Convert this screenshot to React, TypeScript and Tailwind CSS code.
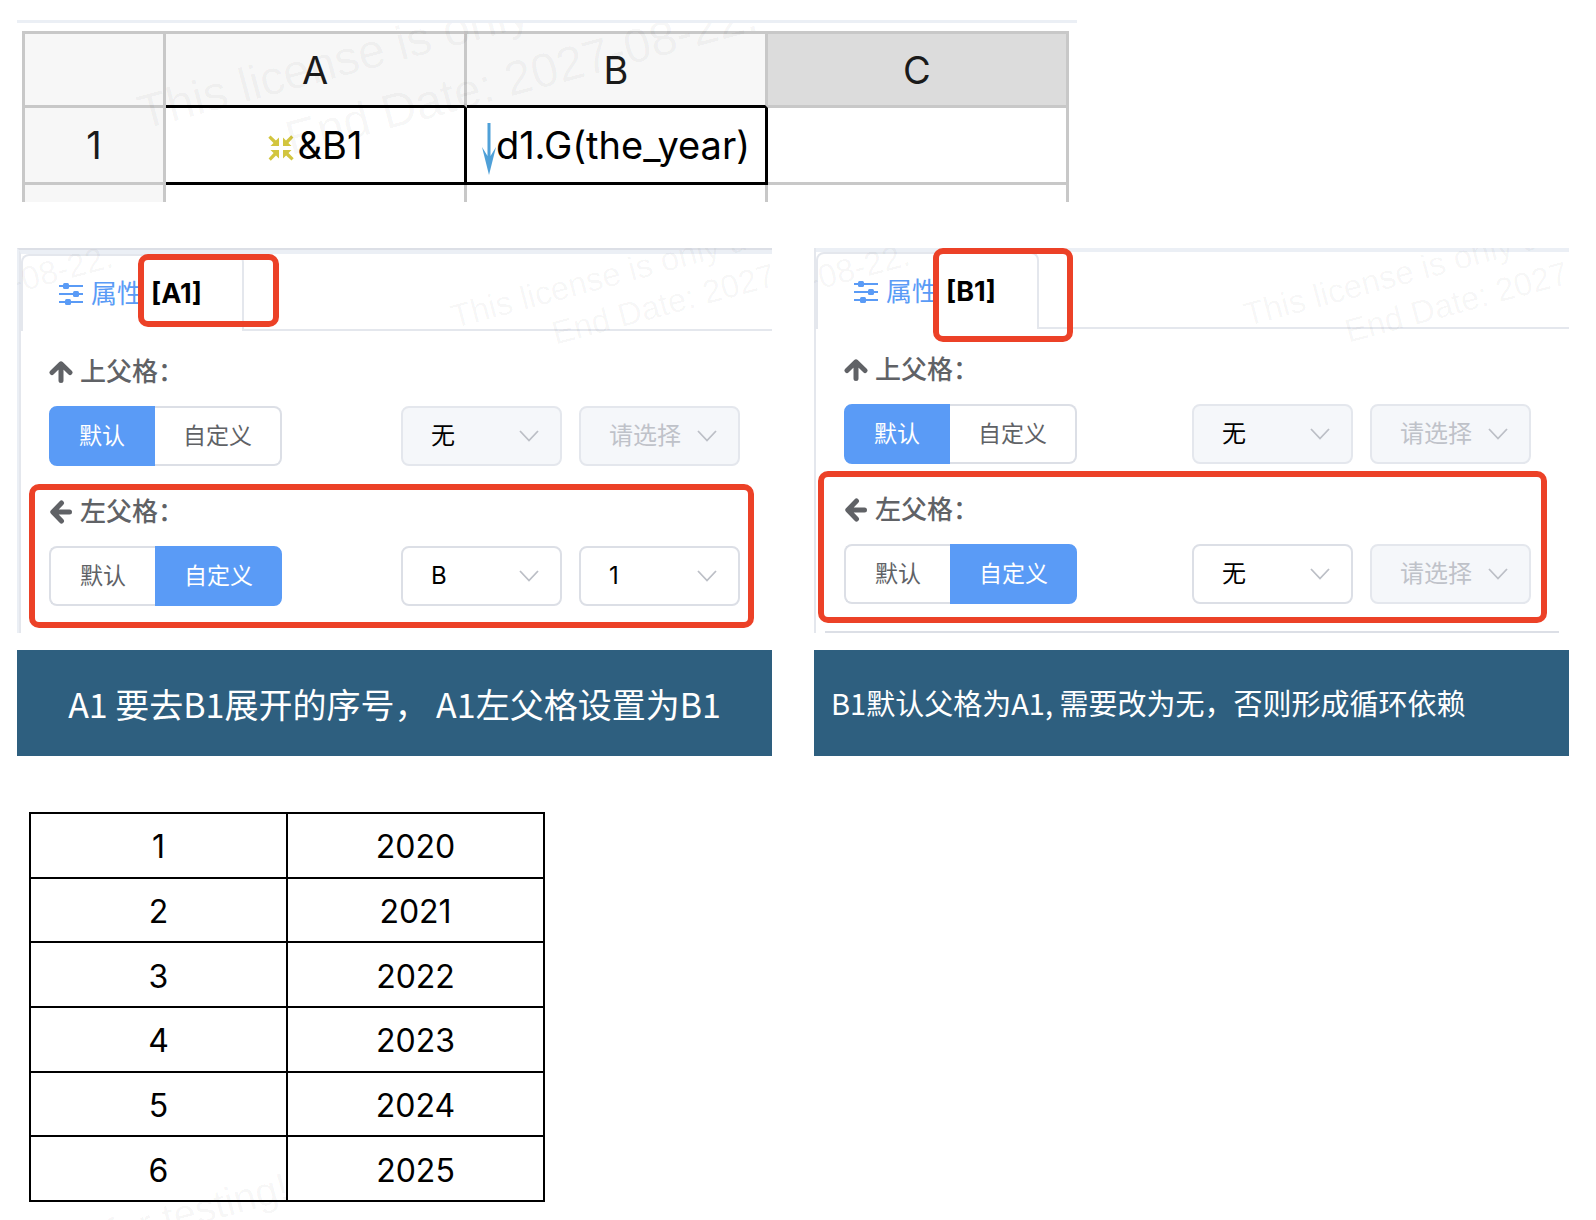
import React, { useId } from "react";

function CompressIcon() {
  return (
    <svg viewBox="0 0 26 26" className="mt-1.5 size-[26px] shrink-0" fill="#d2c53f" aria-hidden="true">
      {[0, 90, 180, 270].map((angle) => (
        <path
          key={angle}
          transform={`rotate(${angle} 13 13)`}
          d="M11 2.500v8.500H2.500l3-3L.3 2.800 2.500.6l5.400 5z"
        />
      ))}
    </svg>
  );
}

function ExpandDownIcon() {
  return (
    <svg viewBox="0 0 14 52" className="mt-2 h-[52px] w-[14px] shrink-0" fill="#4fa0d8" aria-hidden="true">
      <path d="M5.500 0h3v33L14 24 7 52 0 24l5.500 9z" />
    </svg>
  );
}

function SlidersIcon() {
  return (
    <svg viewBox="0 0 24 22" className="h-[22px] w-6 shrink-0" aria-hidden="true">
      <path d="M0 3h24M0 11h24M0 19h24" stroke="#5a9bf6" strokeWidth="1.800" />
      <g fill="#5a9bf6">
        <rect x="4" y="0" width="6" height="6" rx="1.500" />
        <rect x="14" y="8" width="6" height="6" rx="1.500" />
        <rect x="6" y="16" width="6" height="6" rx="1.500" />
      </g>
    </svg>
  );
}

function ArrowIcon({ turn }: { turn: number }) {
  return (
    <svg
      viewBox="0 0 24 24"
      className="size-6 shrink-0"
      fill="none"
      stroke="#606266"
      strokeWidth="5"
      strokeLinecap="round"
      strokeLinejoin="round"
      aria-hidden="true"
    >
      <path transform={`rotate(${turn} 12 12)`} d="M3 12.500 12 3.800l9 8.700M12 5v15.500" />
    </svg>
  );
}

const watermarkBase =
  "pointer-events-none absolute origin-left -rotate-[15deg] whitespace-pre text-center font-['Liberation_Sans',sans-serif] text-black/4";
const licenseText = "This license is only used for testing!\nEnd Date: 2027-08-22.";

function Sheet() {
  const cell = "border-r-[3px] border-b-[3px] p-0 text-center font-normal";
  return (
    <section className="relative max-w-[1060px] overflow-hidden border-t-[3px] border-[#ebeff5] pt-2 pr-2 pl-[5px]">
      <table className="w-full table-fixed border-separate border-spacing-0 border-t-[3px] border-l-[3px] border-[#c8c8c8] text-[38px] leading-none">
        <colgroup>
          <col className="w-[141px]" />
          <col />
          <col />
          <col />
        </colgroup>
        <thead>
          <tr className="h-[74px] bg-[#f7f7f7] text-[#1a1a1a]">
            <th scope="col" aria-label="行号" className={`${cell} border-[#c8c8c8]`} />
            <th scope="col" className={`${cell} border-r-[#c8c8c8] border-b-black`}>A</th>
            <th scope="col" className={`${cell} border-r-[#c8c8c8] border-b-black`}>B</th>
            <th scope="col" className={`${cell} border-[#c8c8c8] bg-[#dcdcdc]`}>C</th>
          </tr>
        </thead>
        <tbody className="text-black">
          <tr className="h-[77px]">
            <th scope="row" className={`${cell} border-[#c8c8c8] bg-[#f7f7f7] text-[#1a1a1a]`}>1</th>
            <td className={`${cell} border-black`}>
              <span className="flex items-center justify-center gap-1">
                <CompressIcon />
                &amp;B1
              </span>
            </td>
            <td className={`${cell} border-black`}>
              <span className="flex items-center justify-center">
                <ExpandDownIcon />
                d1.G(the_year)
              </span>
            </td>
            <td className={`${cell} border-[#c8c8c8]`} />
          </tr>
          <tr className="h-[17px]">
            <th aria-label="2" className="border-r-[3px] border-[#c8c8c8] bg-[#f7f7f7] p-0" />
            <td className="border-r-[3px] border-[#c8c8c8] p-0" />
            <td className="border-r-[3px] border-[#c8c8c8] p-0" />
            <td className="border-r-[3px] border-[#c8c8c8] p-0" />
          </tr>
        </tbody>
      </table>
      <div aria-hidden="true" className={`${watermarkBase} top-[58px] left-[130px] text-[48px] leading-[63px]`}>
        {licenseText}
      </div>
    </section>
  );
}

type Choice = { text: string; disabled?: boolean; placeholder?: boolean };

function Select({ label, text, disabled, placeholder }: Choice & { label: string }) {
  const id = useId();
  return (
    <div className="relative w-[161px]">
      <label htmlFor={id} className="sr-only">{label}</label>
      <select
        id={id}
        disabled={disabled}
        className={`h-[60px] w-full appearance-none rounded-[8px] border-2 pl-7 text-[24px] leading-8 disabled:opacity-100 ${
          disabled ? "border-[#e4e7ed] bg-[#f5f7fa]" : "border-[#dcdfe6] bg-white"
        } ${placeholder ? "text-[#bfc2c9]" : "text-black"}`}
      >
        <option>{text}</option>
      </select>
      <svg
        viewBox="0 0 20 12"
        className="pointer-events-none absolute top-6 right-[23px] h-3 w-5"
        fill="none"
        stroke="#bcbfc6"
        strokeWidth="1.800"
        aria-hidden="true"
      >
        <path d="M1 1l9 9.500L19 1" />
      </svg>
    </div>
  );
}

function ParentCell({
  title,
  icon,
  custom,
  column,
  row,
}: {
  title: string;
  icon: React.ReactNode;
  custom: boolean;
  column: Choice;
  row: Choice;
}) {
  const on = "border-[#5a9bf6] bg-[#5a9bf6] text-white";
  const off = "border-[#dcdfe6] bg-white text-[#606266]";
  return (
    <div role="group" aria-label={title} className="flex flex-col gap-[14px]">
      <div className="flex h-10 items-center gap-[7px] text-[26px] leading-10 font-medium text-[#606266]">
        {icon}
        {title}：
      </div>
      <div className="flex justify-between">
        <div className="flex h-[60px] text-[23px] leading-8">
          <button type="button" aria-pressed={!custom} className={`w-[106px] rounded-l-[8px] border-2 ${custom ? `${off} border-r-0` : on}`}>
            默认
          </button>
          <button type="button" aria-pressed={custom} className={`w-[127px] rounded-r-[8px] border-2 ${custom ? on : `${off} border-l-0`}`}>
            自定义
          </button>
        </div>
        <div className="flex gap-[17px]">
          <Select label={`${title}列`} {...column} />
          <Select label={`${title}行`} {...row} />
        </div>
      </div>
    </div>
  );
}

const none: Choice = { text: "无" };
const pick: Choice = { text: "请选择", disabled: true, placeholder: true };

function Panel({
  cell,
  outerFrame,
  innerFrame,
  bodyClass,
  tabMark,
  groupMark,
  watermark,
  watermarkTail,
  column,
  row,
  divider,
}: {
  cell: string;
  outerFrame: string;
  innerFrame: string;
  bodyClass: string;
  tabMark: string;
  groupMark: string;
  watermark: string;
  watermarkTail: string;
  column: Choice;
  row: Choice;
  divider?: boolean;
}) {
  const mark = "pointer-events-none absolute rounded-[10px] border-[6px] border-[#ec4127]";
  return (
    <section className="relative overflow-hidden">
      <div className={outerFrame}>
        <div className={innerFrame}>
          <div className="flex h-[77px]" role="tablist">
            <button
              type="button"
              role="tab"
              aria-selected="true"
              className="flex w-[223px] items-center gap-2 rounded-t-[8px] border-2 border-b-0 border-[#e4e7ed] pl-[36px] text-[26px] leading-8 text-[#5a9bf6]"
            >
              <SlidersIcon />
              <span>属性</span>
              <strong className="text-[27px] font-bold text-black">[{cell}]</strong>
            </button>
            <div className="flex-1 border-b-2 border-[#e4e7ed]" />
          </div>
          <div className={`flex flex-col gap-[26px] pt-[21px] pl-7 ${bodyClass}`}>
            <ParentCell
              title="上父格"
              icon={<ArrowIcon turn={0} />}
              custom={false}
              column={{ ...none, disabled: true }}
              row={pick}
            />
            <ParentCell title="左父格" icon={<ArrowIcon turn={-90} />} custom column={column} row={row} />
          </div>
        </div>
      </div>
      {divider && <hr className="absolute right-[10px] bottom-0 left-[11px] border-t-2 border-[#dcdfe6]" />}
      <div aria-hidden="true" className={`${watermarkBase} text-[33px] leading-[42px] ${watermark}`}>
        {licenseText}
      </div>
      <div aria-hidden="true" className={`${watermarkBase} text-[33px] leading-[42px] ${watermarkTail}`}>
        -08-22.
      </div>
      <span className={`${mark} ${tabMark}`} />
      <span className={`${mark} ${groupMark}`} />
    </section>
  );
}

function Results() {
  const years = [2020, 2021, 2022, 2023, 2024, 2025];
  return (
    <section className="relative mt-14 ml-3 max-w-[516px]">
      <table className="h-[390px] w-full table-fixed border-collapse text-center text-[32px] leading-none text-black">
        <tbody>
          {years.map((year, index) => (
            <tr key={year}>
              <td className="border-2 border-black px-0 pt-1 pb-0">{index + 1}</td>
              <td className="border-2 border-black px-0 pt-1 pb-0">{year}</td>
            </tr>
          ))}
        </tbody>
      </table>
      <div aria-hidden="true" className={`${watermarkBase} -bottom-[54px] left-[78px] text-[40px] leading-[44px]`}>
        for testing!
      </div>
    </section>
  );
}

export default function App() {
  return (
    <main className="min-h-screen overflow-hidden bg-white pt-5 pr-[27px] pl-[17px] font-[Inter,'Noto_Sans_CJK_SC',sans-serif]">
      <Sheet />
      <div className="mt-[46px] grid grid-cols-2 gap-x-[42px] gap-y-[17px]">
        <Panel
          cell="A1"
          outerFrame="h-[385px] border-t-2 border-l-2 border-t-[#dcdfe6] border-l-[#ebeff5]"
          innerFrame="h-full border-t-4 border-l-2 border-t-[#ebeff5] border-l-[#e4e7ed]"
          bodyClass="pr-8"
          tabMark="top-[6px] left-[121px] h-[73px] w-[141px]"
          groupMark="top-[236px] right-[18px] left-3 h-[144px]"
          watermark="top-[48px] left-[440px]"
          watermarkTail="top-[14px] -left-[6px]"
          column={{ text: "B" }}
          row={{ text: "1" }}
        />
        <Panel
          cell="B1"
          outerFrame="h-[385px] border-l-2 border-[#e4e7ed]"
          innerFrame="h-full border-t-4 border-[#ebeff5]"
          bodyClass="pr-[38px]"
          tabMark="top-0 left-[119px] h-[94px] w-[140px]"
          groupMark="top-[223px] right-[22px] left-1 h-[152px]"
          watermark="top-[46px] left-[436px]"
          watermarkTail="top-[12px] -left-[6px]"
          column={none}
          row={pick}
          divider
        />
        <p className="flex h-[106px] items-center justify-center bg-[#2e5f7f] font-['Noto_Sans_CJK_SC',sans-serif] text-[34px] text-white">
          A1 要去B1展开的序号， A1左父格设置为B1
        </p>
        <p className="flex h-[106px] items-center bg-[#2e5f7f] pl-[17px] font-['Noto_Sans_CJK_SC',sans-serif] text-[29px] text-white">
          B1默认父格为A1, 需要改为无，否则形成循环依赖
        </p>
      </div>
      <Results />
    </main>
  );
}
